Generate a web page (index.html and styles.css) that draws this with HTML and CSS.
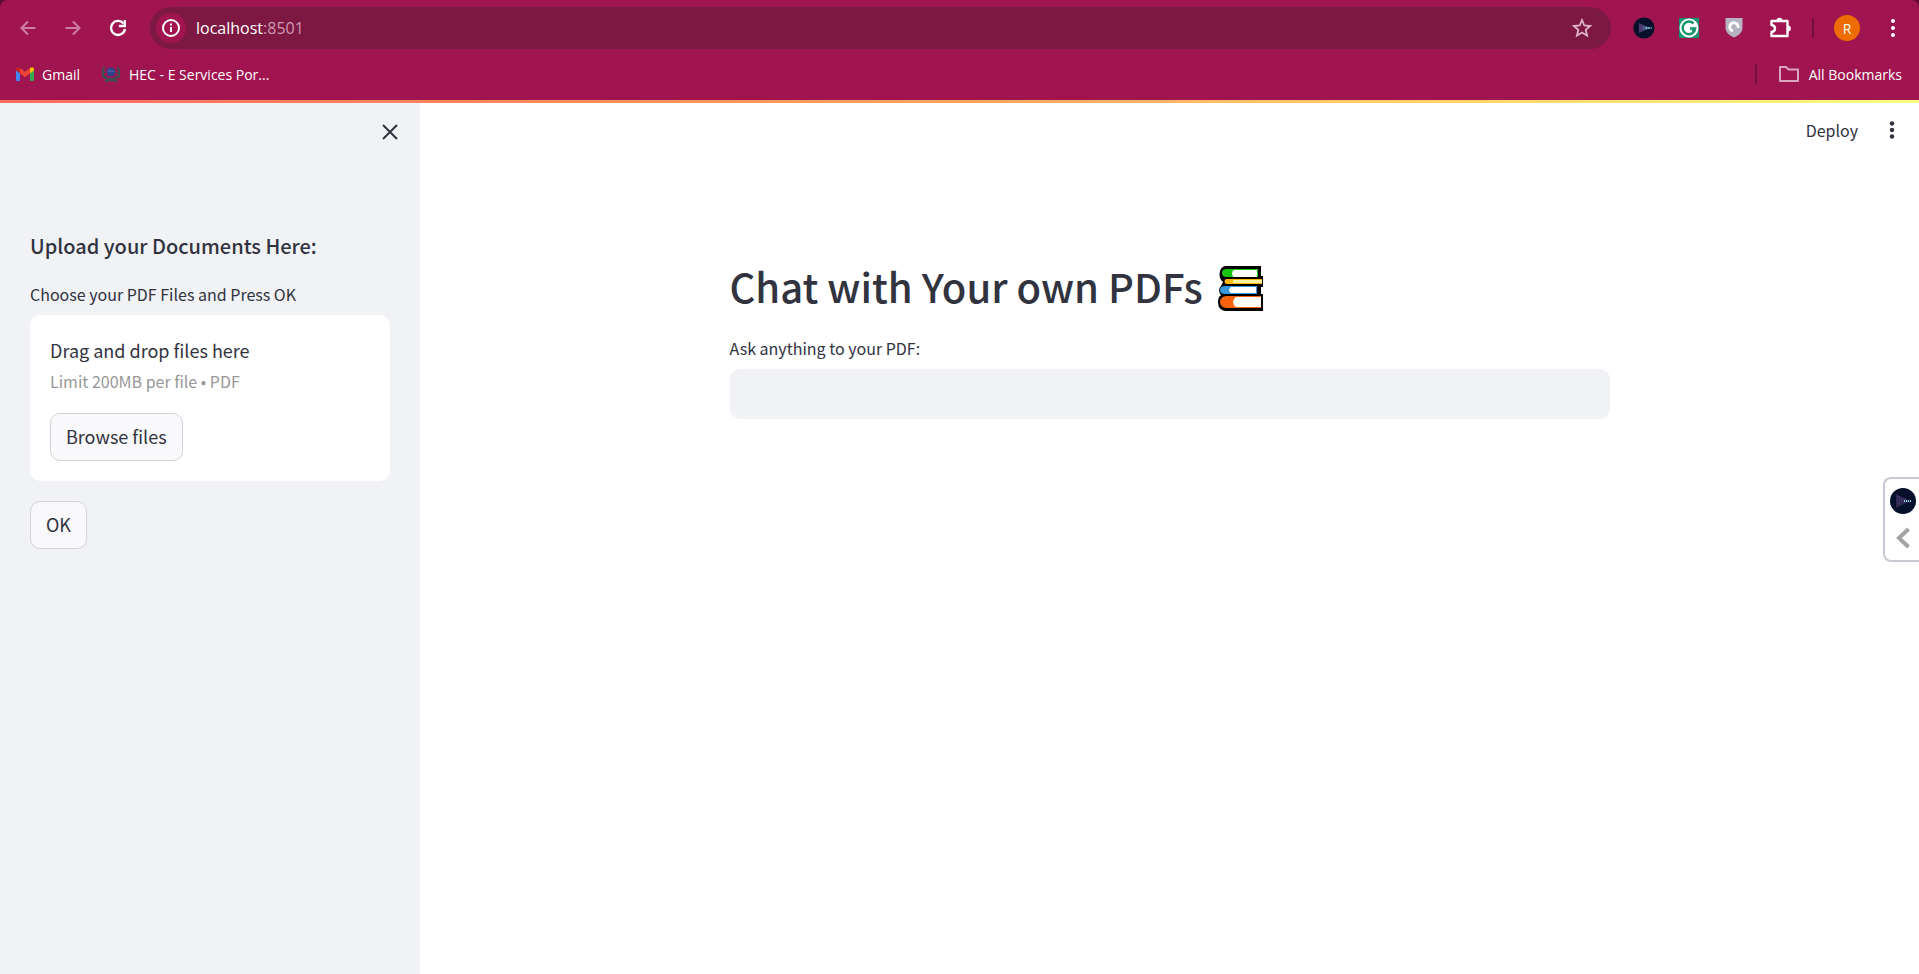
FILE: index.html
```html
<!DOCTYPE html>
<html lang="en">
<head>
<meta charset="utf-8">
<title>Chat with Your own PDFs</title>
<link rel="stylesheet" href="styles.css">
</head>
<body>
<header class="chrome">
  <div class="toolbar">
    <nav class="nav-buttons" aria-label="History">
      <button class="icon-btn dim" aria-label="Back"><svg width="20" height="20" viewBox="0 0 20 20" fill="none" stroke="currentColor" stroke-width="2"><path d="M17.500 10H4M10 3.500L3.500 10l6.500 6.500"/></svg></button>
      <button class="icon-btn dim" aria-label="Forward"><svg width="20" height="20" viewBox="0 0 20 20" fill="none" stroke="currentColor" stroke-width="2"><path d="M2.500 10H16M10 3.500l6.500 6.500-6.500 6.500"/></svg></button>
      <button class="icon-btn" aria-label="Reload"><svg width="20" height="20" viewBox="0 0 20 20" fill="none" stroke="currentColor" stroke-width="2.300"><path d="M15.500 5.500A7 7 0 1 0 17 11"/><path d="M16.800 2v6h-6"/></svg></button>
    </nav>
    <div class="omnibox">
      <button class="site-info" aria-label="View site information"><svg width="20" height="20" viewBox="0 0 20 20" fill="none" stroke="currentColor" stroke-width="2"><circle cx="10" cy="10" r="8"/><path d="M10 9v5M10 5.500v2"/></svg></button>
      <span class="url">localhost<span class="port">:8501</span></span>
      <button class="star" aria-label="Bookmark this tab"><svg width="22" height="22" viewBox="0 0 22 22" fill="none" stroke="currentColor" stroke-width="1.800"><path d="M11 3l2.300 5.500 5.900.5-4.500 3.900 1.400 5.800-5.100-3.100-5.100 3.100 1.400-5.800L2.800 9l5.900-.5z"/></svg></button>
    </div>
    <div class="extensions">
      <button class="icon-btn" aria-label="Video extension"><svg width="22" height="22" viewBox="0 0 26 26"><circle cx="13" cy="13" r="12.500" fill="#07102b"/><path d="M7 7l13 6-13 6z" fill="#4d3b6c"/><path d="M12 10l9 3-9 3z" fill="#425e85"/><path d="M15 13h7" stroke="#8fd6ea" stroke-width="1.500" stroke-dasharray="2 1"/></svg></button>
      <button class="icon-btn" aria-label="Writing assistant"><svg width="22" height="22" viewBox="0 0 22 22"><path fill="#16966f" d="M1 1h20v20H1z"/><circle cx="11" cy="11" r="9.500" fill="#fff"/><path d="M15.500 6.500A6.300 6.300 0 1 0 17.200 11.500H12M14.500 14.500l2.500-3" fill="none" stroke="#16966f" stroke-width="2.400"/></svg></button>
      <button class="icon-btn" aria-label="Shield extension"><svg width="22" height="22" viewBox="0 0 22 22"><path d="M2.500 1h17v9.500c0 5-4 8-8.500 10-4.500-2-8.500-5-8.500-10z" fill="#b5b3c1"/><path d="M15 11A4.200 4.200 0 1 0 10 14" fill="none" stroke="#fff" stroke-width="2.800"/></svg></button>
      <button class="icon-btn" aria-label="Extensions"><svg width="24" height="24" viewBox="0 0 24 24"><path d="M3.500 5h16v15h-16v-4q3.500-.5 3.500-3.500T3.500 9z" fill="none" stroke="#fff" stroke-width="2.400" stroke-linejoin="round"/><path d="M8.500 4.500a3 2.800 0 0 1 6 0zM20 9.500a2.800 3 0 0 1 0 6z" fill="#fff"/></svg></button>
      <span class="divider"></span>
      <button class="avatar" aria-label="Profile">R</button>
      <button class="icon-btn menu" aria-label="Browser menu"><svg width="20" height="20" viewBox="0 0 20 20" fill="currentColor"><circle cx="10" cy="3" r="2"/><circle cx="10" cy="10" r="2"/><circle cx="10" cy="17" r="2"/></svg></button>
    </div>
  </div>
  <nav class="bookmarks" aria-label="Bookmarks">
    <a class="bookmark" href="#gmail"><svg width="18" height="14" viewBox="0 0 18 14"><path d="M0 2.500V12.500Q0 14 1.500 14H4V5z" fill="#4285f4"/><path d="M18 2.500V12.500Q18 14 16.500 14H14V5z" fill="#34a853"/><path d="M4 1v5.500l5 3.800 5-3.800V1L9 4.800z" fill="#ea4335"/><path d="M0 2Q.5-1 4 1v5.500L0 3.500z" fill="#c5221f"/><path d="M18 2Q17.500-1 14 1v5.500l4-3z" fill="#fbbc04"/></svg>Gmail</a>
    <a class="bookmark" href="#hec"><svg width="20" height="20" viewBox="0 0 20 20"><path d="M3.500 3Q0 9 3.500 13.500q6.500 3.500 13 0Q20 9 16.500 3M1 7l3 2M1 12l4 1M19 7l-3 2M19 12l-4 1M4 17.500q6-2.500 12 0" fill="none" stroke="#3a5055" stroke-width="2"/><circle cx="10" cy="8" r="4.500" fill="#31428d"/><path d="M7 8q3-3 6 0" stroke="#5874a5" fill="none"/></svg>HEC - E Services Por...</a>
    <span class="divider push"></span>
    <button class="all-bookmarks"><svg width="22" height="18" viewBox="0 0 22 18" fill="none" stroke="#d9a6be" stroke-width="2"><path d="M2 2h6l2.500 2.500H20V16H2z" stroke-linejoin="round"/></svg>All Bookmarks</button>
  </nav>
</header>
<div class="rainbow"></div>
<div class="app">
  <aside class="sidebar">
    <div class="sidebar-top">
      <button class="close" aria-label="Close sidebar"><svg width="20" height="20" viewBox="0 0 20 20" fill="none" stroke="currentColor" stroke-width="2"><path d="M3 3l14 14M17 3L3 17"/></svg></button>
    </div>
    <h2 class="sidebar-title">Upload your Documents Here:</h2>
    <p class="label" id="files-label">Choose your PDF Files and Press OK</p>
    <section class="dropzone" aria-labelledby="files-label">
      <p class="drop-title">Drag and drop files here</p>
      <p class="drop-limit">Limit 200MB per file • PDF</p>
      <button class="btn">Browse files</button>
    </section>
    <button class="btn">OK</button>
  </aside>
  <main class="main">
    <div class="app-bar">
      <button class="deploy">Deploy</button>
      <button class="icon-btn" aria-label="Main menu"><svg width="20" height="20" viewBox="0 0 20 20" fill="currentColor"><circle cx="10" cy="3.500" r="2.200"/><circle cx="10" cy="10" r="2.200"/><circle cx="10" cy="16.500" r="2.200"/></svg></button>
    </div>
    <div class="content">
      <h1 class="title">Chat with Your own PDFs
        <svg class="books" width="48" height="46" viewBox="0 0 48 46" role="img" aria-label="Books">
          <path d="M8 1h36v10h2v11h-2v7h2v17H8Q1 45 1 37q0-5 3-7-4-5 0-9l2-4Q1 13 3 6q1-4 5-5z" fill="#000"/>
          <path d="M10 4h31v8H10Q5 12 5 8t5-4z" fill="#16c60c"/><path d="M17 5h23v7H17q-2-1-2-3.500T17 5z" fill="#fff"/>
          <path d="M9 14h36v5H9q-3-2.500 0-5z" fill="#ffb900"/><path d="M16 15h29v3H16z" fill="#fff3a0"/>
          <path d="M8 21h32v8H8q-5 0-5-4t5-4z" fill="#3a96dd"/><path d="M14 22h25v6H14q-4-3 0-6z" fill="#fff"/>
          <path d="M9 31h35v12H9q-6-1-6-6t6-6z" fill="#f7630c"/><path d="M19 32h25v10H19q-3-2-3-5t3-5z" fill="#fff"/>
        </svg>
      </h1>
      <label class="label" for="question">Ask anything to your PDF:</label>
      <input class="question" id="question" type="text">
    </div>
  </main>
</div>
<aside class="dock" aria-label="Floating extension">
  <svg width="26" height="26" viewBox="0 0 26 26"><circle cx="13" cy="13" r="13" fill="#07102b"/><path d="M6 6l14 7-14 7z" fill="#30264d"/><path d="M7 9h3M7 12h5M7 15h4M11 11h5M11 14h9" stroke="#46518d" stroke-dasharray="1 1"/><path d="M14 13h8" stroke="#8fd6ea" stroke-width="2" stroke-dasharray="1 1"/></svg>
  <button class="dock-toggle" aria-label="Expand"><svg width="14" height="22" viewBox="0 0 14 22" fill="none" stroke="#a3a3a3" stroke-width="4"><path d="M12.500 2L3 11l9.500 9"/></svg></button>
</aside>
</body>
</html>
```
FILE: styles.css
```css
* { box-sizing: border-box; }

body {
  margin: 0;
  min-height: 100vh;
  display: flex;
  flex-direction: column;
  background: #fff;
  color: #31333f;
  font-family: "Noto Sans CJK JP", "Noto Sans CJK SC", sans-serif;
}

button {
  font: inherit;
  color: inherit;
  border: 0;
  padding: 0;
  background: none;
  cursor: pointer;
}

svg { display: block; flex: none; }
h1, h2, p { margin: 0; }

/* Browser frame */
.chrome {
  background: linear-gradient(#5f0b32, #5f0b32) top / 100% 8px no-repeat, #a0154f;
  color: #fff;
  font-family: "Open Sans", "Noto Sans", sans-serif;
  font-size: 14px;
}

.toolbar {
  display: flex;
  align-items: center;
  height: 56px;
  padding: 0 16px 0 18px;
  border-radius: 8px 8px 0 0;
  background: #a0154f;
}

.nav-buttons { display: flex; gap: 25px; margin-right: 22px; }
.icon-btn { display: grid; place-items: center; min-width: 20px; }
.dim { color: #cd7da0; }

.omnibox {
  flex: 1;
  display: flex;
  align-items: center;
  height: 42px;
  padding: 0 18px 0 6px;
  border-radius: 21px;
  background: #7c1842;
}

.site-info {
  display: grid;
  place-items: center;
  width: 30px;
  height: 30px;
  border-radius: 50%;
  background: #a0154f;
}

.url { margin-left: 10px; font-size: 16px; }
.port { color: #d197b2; }
.star { margin-left: auto; color: #dfb4c8; }

.extensions { display: flex; align-items: center; gap: 23px; margin-left: 22px; }
.divider { width: 2px; height: 20px; background: #74103c; }
.extensions .divider { margin: 0 -3px; }

.avatar {
  width: 26px;
  height: 26px;
  border-radius: 50%;
  background: #ef6c00;
  font-size: 14px;
}

.bookmarks {
  display: flex;
  align-items: center;
  gap: 21px;
  height: 44px;
  padding: 0 17px 8px 16px;
}
.bookmark { display: flex; align-items: center; gap: 8px; color: #fff; text-decoration: none; }
.push { margin-left: auto; }
.all-bookmarks { display: flex; align-items: center; gap: 9px; }

.rainbow {
  height: 3px;
  background: linear-gradient(90deg, #ff6b5c, #ffa35c 50%, #fffd80);
}

/* Application */
.app { flex: 1; display: flex; }

.sidebar {
  width: 420px;
  padding: 0 30px;
  background: #f0f2f6;
}
.sidebar-top { display: flex; justify-content: flex-end; height: 124px; padding-top: 19px; }
.close { align-self: flex-start; margin-right: -10px; }

.sidebar-title { font-size: 20px; line-height: 38px; font-weight: 500; }
.label { display: block; font-size: 16px; line-height: 28px; }
.sidebar .label { margin: 15px 0 7px; }

.dropzone {
  padding: 20px;
  margin-bottom: 20px;
  border-radius: 10px;
  background: #fff;
}
.drop-title { font-size: 18px; line-height: 30px; }
.drop-limit { margin: 2px 0 18px; font-size: 16px; line-height: 28px; color: #979797; }

.btn {
  height: 48px;
  padding: 0 15px 2px;
  border: 1px solid #d2d3d8;
  border-radius: 10px;
  background: #f9f9fb;
  font-size: 18px;
  line-height: 32px;
}

.main { flex: 1; }
.app-bar {
  display: flex;
  justify-content: flex-end;
  align-items: center;
  gap: 24px;
  height: 54px;
  padding-right: 17px;
}
.deploy { font-size: 16px; line-height: 28px; }

.content { max-width: 920px; margin: 0 auto; padding: 94px 20px 0; }
.title {
  display: flex;
  align-items: center;
  gap: 14px;
  font-size: 40px;
  line-height: 70px;
  font-weight: 500;
}
.books { margin-top: 4px; }
.content .label { margin: 13px 0 7px; }
.question {
  display: block;
  width: 100%;
  height: 50px;
  padding: 0 16px;
  border: 0;
  border-radius: 10px;
  background: #f0f2f6;
  font: inherit;
}

/* Floating extension tab pinned to the window edge */
.dock {
  position: absolute;
  top: 49%;
  right: 0;
  display: flex;
  flex-direction: column;
  align-items: center;
  gap: 13px;
  padding: 9px 3px 11px 5px;
  border: 2px solid #c8c8d2;
  border-right: 0;
  border-radius: 8px 0 0 8px;
  background: #fff;
}
```
